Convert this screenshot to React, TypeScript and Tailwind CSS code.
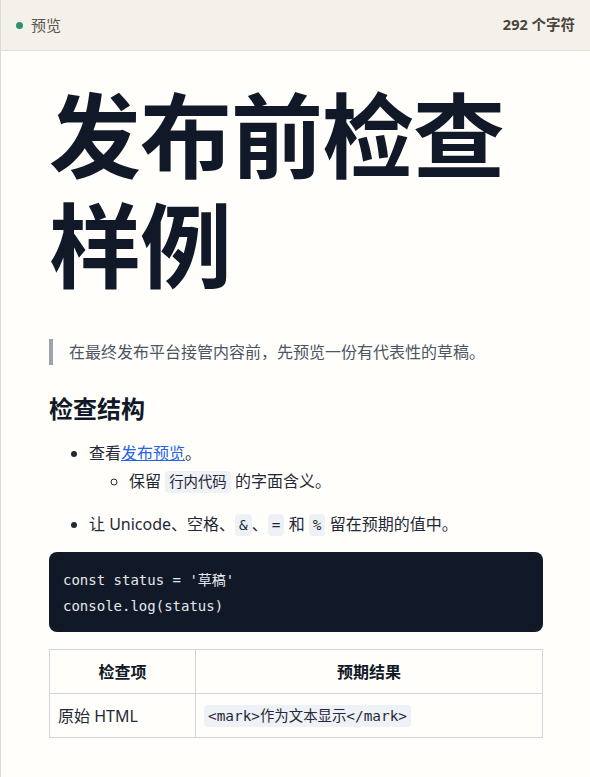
export default function App() {
  const sans = { fontFamily: '"Noto Sans", "Noto Sans CJK SC", sans-serif' }
  return (
    <div className="min-h-[777px] bg-[#fffefb] border-l border-[#dcdad3] text-[#1f2937]" style={sans}>
      <header className="h-[51px] bg-[#f4f1ea] border-b border-[#e2ded5] flex items-center justify-between pl-[15px] pr-[15px]">
        <div className="flex items-center gap-[8px] text-[15px] text-[#5a554d]">
          <span className="w-[7px] h-[7px] rounded-full bg-[#2f8f6f]" />
          预览
        </div>
        <div className="text-[14.5px] font-bold text-[#4a443c]">292 个字符</div>
      </header>

      <main className="pl-[48px] pr-[47px] pt-[30px] pb-[40px]">
        <h1 className="text-[92px] leading-[110px] font-bold text-[#111827] tracking-[-1px]">
          发布前检查样例
        </h1>

        <blockquote className="mt-[38px] border-l-4 border-[#9ca3af] pl-[16px] text-[16px] leading-[26px] text-[#4b5563]">
          在最终发布平台接管内容前，先预览一份有代表性的草稿。
        </blockquote>

        <h2 className="mt-[28px] text-[24px] leading-[32px] font-bold text-[#111827]">检查结构</h2>

        <ul className="mt-[14px] list-disc pl-[40px] text-[16px] leading-[28px] text-[#1f2937]">
          <li className="mb-[14px]">
            查看<a href="#" className="text-[#2563eb] underline">发布预览</a>。
            <ul className="list-[circle] pl-[40px]">
              <li>
                保留 <Code>行内代码</Code> 的字面含义。
              </li>
            </ul>
          </li>
          <li>
            让 Unicode、空格、<Code>&amp;</Code>、<Code>=</Code> 和 <Code>%</Code> 留在预期的值中。
          </li>
        </ul>

        <pre
          className="mt-[13px] bg-[#111827] text-[#e5e7eb] rounded-[8px] px-[14px] pt-[15px] pb-[13px] text-[14px] leading-[26px]"
          style={{ fontFamily: '"DejaVu Sans Mono", "Noto Sans CJK SC", monospace' }}
        >
          {"const status = '草稿'\nconsole.log(status)"}
        </pre>

        <table className="mt-[17px] w-full border-collapse text-[16px]">
          <thead>
            <tr>
              <th className="w-[146px] h-[44px] border border-[#d1d5db] font-bold text-[#111827]">检查项</th>
              <th className="h-[44px] border border-[#d1d5db] font-bold text-[#111827]">预期结果</th>
            </tr>
          </thead>
          <tbody>
            <tr>
              <td className="h-[44px] border border-[#d1d5db] px-[8px]">原始 HTML</td>
              <td className="h-[44px] border border-[#d1d5db] px-[8px]">
                <Code>&lt;mark&gt;作为文本显示&lt;/mark&gt;</Code>
              </td>
            </tr>
          </tbody>
        </table>
      </main>
    </div>
  )
}

function Code({ children }: { children: React.ReactNode }) {
  return (
    <code
      className="bg-[#eef1f5] rounded-[4px] px-[4px] py-[3px] text-[14.4px]"
      style={{ fontFamily: '"DejaVu Sans Mono", "Noto Sans CJK SC", monospace' }}
    >
      {children}
    </code>
  )
}
